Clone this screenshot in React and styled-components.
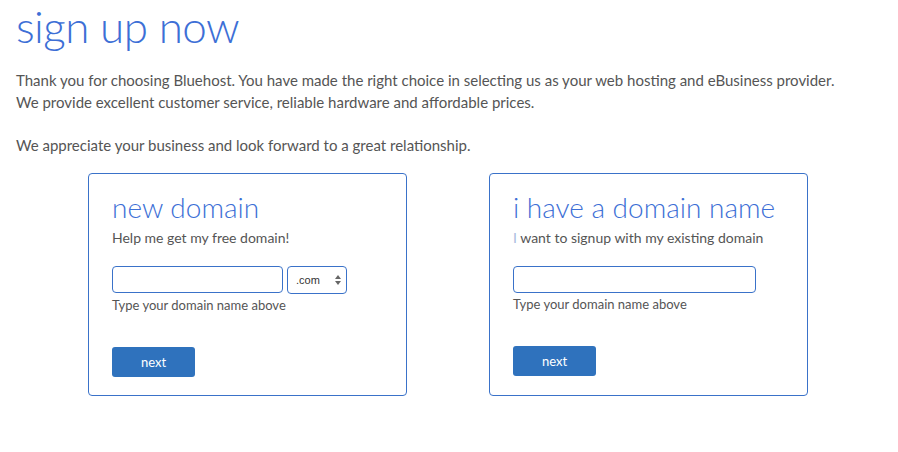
import styled, { createGlobalStyle } from "styled-components";

const GlobalStyle = createGlobalStyle`
  body {
    margin: 0;
    background: #fff;
    font-family: Lato, "Open Sans", sans-serif;
  }
`;

const Page = styled.div`
  width: 898px;
  height: 452px;
  padding: 0 16px;
  box-sizing: border-box;
  overflow: hidden;
`;

const Title = styled.h1`
  margin: 0;
  font-size: 44px;
  font-weight: 300;
  letter-spacing: -0.6px;
  line-height: 52px;
  color: #3d6fd6;
`;

const Intro = styled.p`
  margin: 17px 0 0;
  font-size: 15px;
  line-height: 22px;
  color: #555;
  & + & {
    margin-top: 21px;
  }
`;

const Cards = styled.div`
  display: flex;
  gap: 82px;
  margin: 17px 0 0 72px;
`;

const Card = styled.div`
  width: 319px;
  height: 223px;
  box-sizing: border-box;
  border: 1px solid #3a72c9;
  border-radius: 4px;
  padding: 17px 23px 0;
`;

const CardTitle = styled.h2`
  margin: 0;
  font-size: 28px;
  font-weight: 300;
  line-height: 32px;
  color: #3d6fd6;
`;

const CardSub = styled.p`
  margin: 6px 0 0;
  font-size: 14px;
  line-height: 18px;
  color: #555;
`;

const Light = styled.span`
  color: #a8bde0;
`;

const Row = styled.div`
  display: flex;
  gap: 4px;
  margin-top: 19px;
  align-items: flex-start;
`;

const Input = styled.input`
  width: ${(p) => p.$w}px;
  height: 27px;
  box-sizing: border-box;
  border: 1px solid #3a72c9;
  border-radius: 4px;
  padding: 0 6px;
  font-family: inherit;
  outline: none;
`;

const SelectBox = styled.div`
  width: 60px;
  height: 28px;
  box-sizing: border-box;
  border: 1px solid #3a72c9;
  border-radius: 4px;
  display: flex;
  align-items: center;
  justify-content: space-between;
  padding: 0 5px 0 8px;
  font-family: "Liberation Sans", Arial, sans-serif;
  font-size: 11px;
  color: #333;
`;

const Help = styled.p`
  margin: 2px 0 0;
  font-size: 13px;
  line-height: 18px;
  color: #555;
`;

const Button = styled.button`
  margin-top: 33px;
  width: 83px;
  height: 30px;
  border: none;
  border-radius: 3px;
  background: #2f72bd;
  color: #fff;
  font-family: inherit;
  font-size: 13px;
  cursor: pointer;
`;

const Arrows = () => (
  <svg width="6" height="10" viewBox="0 0 6 10">
    <path d="M3 0 L6 4 H0 Z M3 10 L6 6 H0 Z" fill="#666" />
  </svg>
);

export default function App() {
  return (
    <>
      <GlobalStyle />
      <Page>
        <Title>sign up now</Title>
        <Intro>
          Thank you for choosing Bluehost. You have made the right choice in selecting us as your web hosting and eBusiness provider.
          <br />
          We provide excellent customer service, reliable hardware and affordable prices.
        </Intro>
        <Intro>We appreciate your business and look forward to a great relationship.</Intro>
        <Cards>
          <Card>
            <CardTitle>new domain</CardTitle>
            <CardSub>Help me get my free domain!</CardSub>
            <Row>
              <Input $w={171} />
              <SelectBox>
                .com
                <Arrows />
              </SelectBox>
            </Row>
            <Help>Type your domain name above</Help>
            <Button>next</Button>
          </Card>
          <Card>
            <CardTitle>i have a domain name</CardTitle>
            <CardSub>
              <Light>I</Light> want to signup with my existing domain
            </CardSub>
            <Row>
              <Input $w={243} />
            </Row>
            <Help>Type your domain name above</Help>
            <Button>next</Button>
          </Card>
        </Cards>
      </Page>
    </>
  );
}
